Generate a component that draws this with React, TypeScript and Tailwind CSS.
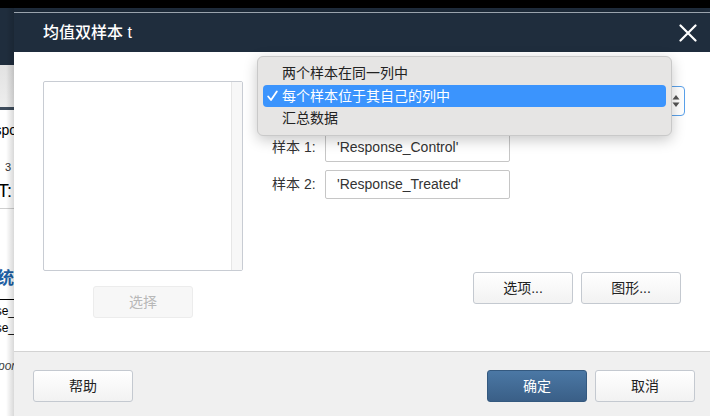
import React from 'react';

const font = "font-['Liberation_Sans','Noto_Sans_CJK_SC',sans-serif]";

function SideStrip() {
  return (
    <div className="relative w-[14px] shrink-0 flex flex-col overflow-hidden bg-white">
      <div className="h-[57px] bg-[#1f2d3d] shrink-0" />
      <div className="h-[42px] bg-gradient-to-b from-[#e2e2e2] to-[#eeeeee] shrink-0" />
      <div className="h-[3px] bg-[#3e4c5c] shrink-0" />
      <div className="flex flex-col items-end whitespace-nowrap text-black">
        <div className="mt-[11px] text-[14px] leading-[18px] -mr-[3px]">Respo</div>
        <div className="mt-[21px] text-[11px] leading-[14px] mr-[3px] text-[#333]">3</div>
        <div className="mt-[6px] text-[18px] leading-[22px] mr-[2px]">T:</div>
        <div className="mt-[6px] h-px w-full bg-[#cfcfcf]" />
        <div className="mt-[59px] text-[17px] leading-[22px] font-bold text-[#1d5fa3]">系统</div>
        <div className="mt-[9px] h-px w-full bg-black" />
        <div className="mt-[3px] text-[12px] leading-[16px] -mr-[1px]">Response_</div>
        <div className="mt-[1px] text-[12px] leading-[16px] -mr-[1px]">Response_</div>
        <div className="mt-[22px] text-[12px] leading-[16px] italic text-[#444] -mr-[4px]">Respon</div>
      </div>
      <div className="absolute inset-y-0 right-0 w-[8px] bg-gradient-to-r from-transparent to-black/15 pointer-events-none" />
    </div>
  );
}

function Btn({ children, primary, disabled }: { children: React.ReactNode; primary?: boolean; disabled?: boolean }) {
  const base = 'w-[100px] h-[32px] rounded-[3px] text-[14px] flex items-center justify-center border';
  if (primary)
    return <div className={`${base} border-[#34597f] bg-gradient-to-b from-[#4b78a5] to-[#3a5f87] text-white`}>{children}</div>;
  if (disabled)
    return <div className={`${base} border-[#ececec] bg-[#f7f7f7] text-[#b8b8b8]`}>{children}</div>;
  return <div className={`${base} border-[#c4c9d0] bg-gradient-to-b from-white to-[#f2f2f2] text-[#222]`}>{children}</div>;
}

function SelectMenu() {
  const items = ['两个样本在同一列中', '每个样本位于其自己的列中', '汇总数据'];
  return (
    <div className="absolute left-[243px] top-[4px] w-[415px] h-[80px] rounded-[6px] border border-[#c9c9c9] bg-[#e6e5e4] shadow-[0_4px_14px_rgba(0,0,0,0.22)] px-[5px] py-[5px] flex flex-col">
      {items.map((t, i) => (
        <div
          key={t}
          className={`h-[23px] flex items-center rounded-[4px] text-[14px] ${i === 1 ? 'bg-[#3b94fd] text-white' : 'text-[#222]'}`}
        >
          <div className="w-[19px] flex justify-center">
            {i === 1 && (
              <svg width="11" height="12" viewBox="0 0 11 12">
                <polyline points="1.2,6.5 4,10 9.8,1.5" fill="none" stroke="white" strokeWidth="1.8" strokeLinecap="round" strokeLinejoin="round" />
              </svg>
            )}
          </div>
          <span>{t}</span>
        </div>
      ))}
    </div>
  );
}

export default function App() {
  return (
    <div className={`w-[710px] h-[416px] overflow-hidden bg-black flex flex-col ${font}`}>
      <div className="h-2 shrink-0 bg-black" />
      <div className="flex flex-1 min-h-0">
        <SideStrip />
        <div className="flex-1 flex flex-col bg-[#1f2d3d]">
          <div className="h-1 shrink-0" />
          <div className="flex-1 flex flex-col bg-white border-t border-[#9aa3ad] shadow-[-3px_0_6px_rgba(0,0,0,0.25)]">
            <div className="h-[39px] shrink-0 bg-[#1f2d3d] flex items-center justify-between pl-[29px] pr-[13px]">
              <span className="text-white text-[16px] font-medium">均值双样本 t</span>
              <svg width="18" height="18" viewBox="0 0 18 18">
                <path d="M1.5 1.5 L16.5 16.5 M16.5 1.5 L1.5 16.5" stroke="white" strokeWidth="2.2" strokeLinecap="round" />
              </svg>
            </div>

            <div className="relative h-[299px] shrink-0 flex pl-[29px] pt-[29px] pr-[25px]">
              <div className="w-[200px] flex flex-col">
                <div className="h-[190px] border border-[#c8ccd3] rounded-[2px] flex justify-end bg-white">
                  <div className="w-[11px] bg-[#f7f7f7] border-l border-[#e6e6e6]" />
                </div>
                <div className="mt-[15px] self-center">
                  <Btn disabled>选择</Btn>
                </div>
              </div>

              <div className="ml-[29px] flex-1 flex flex-col text-[14px] text-[#333]">
                <div className="mt-[5px] flex items-center">
                  <div className="w-[53px]" />
                  <div className="flex-1 h-[30px] border border-[#5aa1ea] rounded-[4px] flex items-center justify-end pr-[4px]">
                    <svg width="8" height="14" viewBox="0 0 8 14">
                      <path d="M4 1 L7.5 5.5 L0.5 5.5 Z M4 13 L7.5 8.5 L0.5 8.5 Z" fill="#555" />
                    </svg>
                  </div>
                </div>
                <div className="mt-[17px] flex items-center">
                  <div className="w-[53px]">样本 1:</div>
                  <div className="w-[185px] h-[29px] border border-[#c6c6c6] rounded-[2px] flex items-center pl-[11px]">'Response_Control'</div>
                </div>
                <div className="mt-[8px] flex items-center">
                  <div className="w-[53px]">样本 2:</div>
                  <div className="w-[185px] h-[29px] border border-[#c6c6c6] rounded-[2px] flex items-center pl-[11px]">'Response_Treated'</div>
                </div>
                <div className="mt-[73px] mr-[4px] flex justify-end gap-[8px]">
                  <Btn>选项...</Btn>
                  <Btn>图形...</Btn>
                </div>
              </div>

              <SelectMenu />
            </div>

            <div className="flex-1 bg-[#f0f0f0] border-t border-[#d3d3d3] flex items-start justify-between pt-[18px] pl-[19px] pr-[15px]">
              <Btn>帮助</Btn>
              <div className="flex gap-[8px]">
                <Btn primary>确定</Btn>
                <Btn>取消</Btn>
              </div>
            </div>
          </div>
        </div>
      </div>
    </div>
  );
}
